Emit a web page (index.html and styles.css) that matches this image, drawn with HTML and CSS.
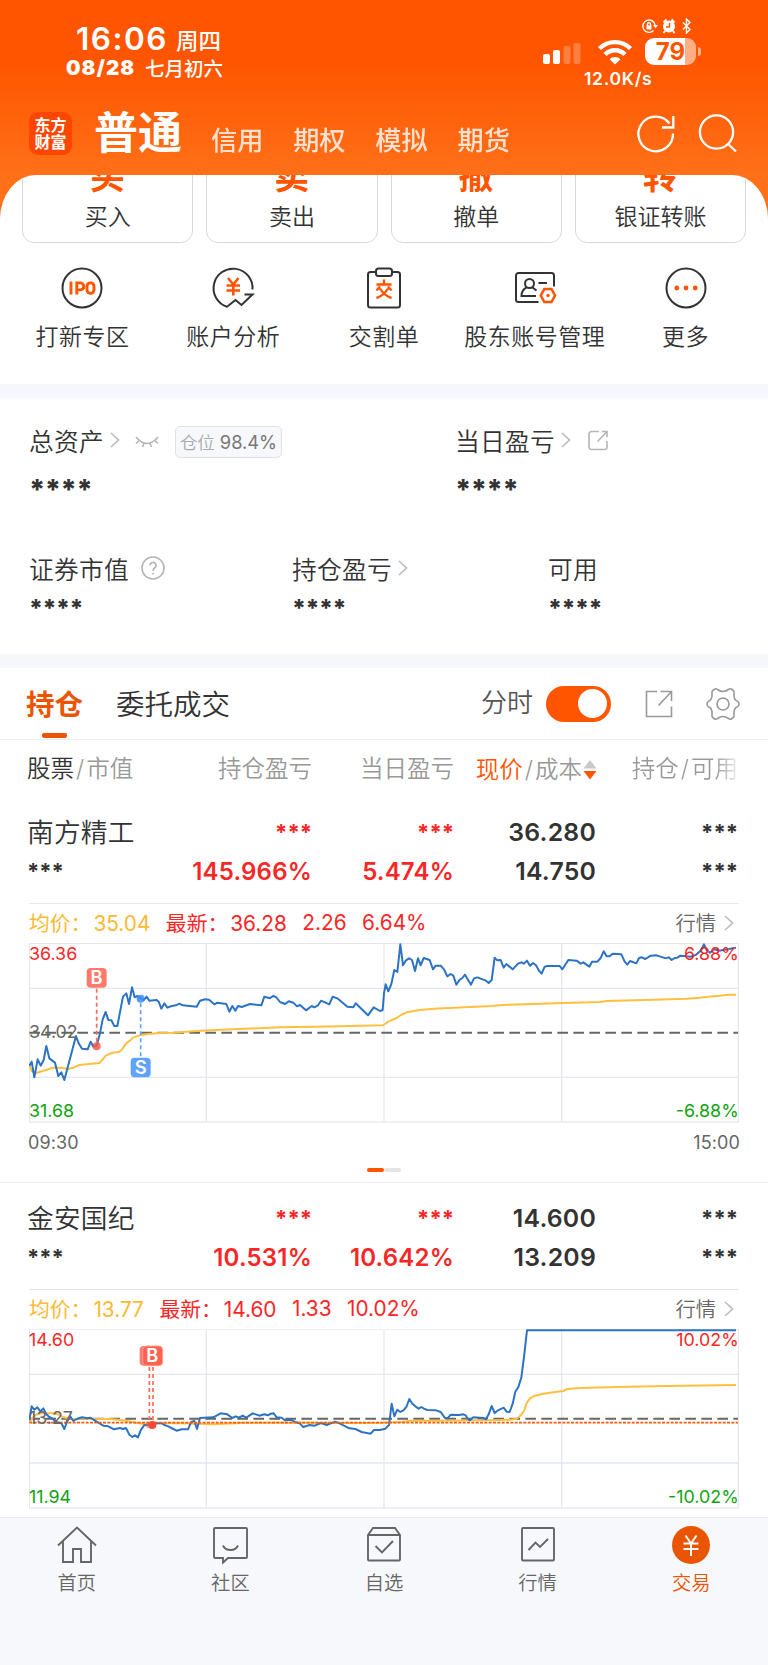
FILE: index.html
```
<!DOCTYPE html>
<html lang="zh-CN">
<head>
  <meta charset="UTF-8">
  <title>东方财富 - 交易</title>
  <link rel="stylesheet" href="styles.css">
</head>
<body>

<header>
  <div class="status">
    <div class="status-left">
      <div class="clock"><b>16:06</b><span>周四</span></div>
      <div class="date"><b>08/28</b><span>七月初六</span></div>
    </div>
    <div class="status-right">
      <svg class="mini" width="52" height="16" viewBox="0 0 52 16" fill="none" stroke="#fff" stroke-width="1.4">
        <path d="M12.5 12.5a6.2 6.2 0 1 1 1.7-5"/><path d="M12 7h5l-2.5 3.200z" fill="#fff" stroke="none"/>
        <path d="M5.500 7.500h5v4h-5z" fill="#fff" stroke="none"/><path d="M6.500 8V6.200a1.500 1.500 0 0 1 3 0V8"/>
        <circle cx="28" cy="8.500" r="6" fill="#fff" stroke="none"/>
        <path d="M22.500 4.500l3-3M33.500 4.500l-3-3M24 13l-1.500 2M32 13l1.500 2" stroke-width="2"/>
        <path d="M28.500 5v4h-3.500" stroke="#ff5500"/>
        <path d="M42 4.500l7 7-3.500 3.500V1L49 4.500l-7 7"/>
      </svg>
      <div class="signals">
        <svg width="38" height="22" viewBox="0 0 38 22" fill="#fff">
          <rect x="0" y="11" width="7" height="10" rx="2"/><rect x="10" y="7" width="7" height="14" rx="2"/>
          <rect x="20.500" y="3" width="7" height="18" rx="2" opacity=".25"/><rect x="30.500" y="0" width="7" height="21" rx="2" opacity=".25"/>
        </svg>
        <svg class="wifi" width="36" height="26" viewBox="0 0 36 26" fill="none" stroke="#fff" stroke-width="4.400">
          <path d="M2.500 9.500a22 22 0 0 1 31 0"/><path d="M8 15.500a14 14 0 0 1 20 0"/>
          <path d="M18 25.500l-5.500-5.300a8 8 0 0 1 11 0z" fill="#fff" stroke="none"/>
        </svg>
        <div class="battery"><b>79</b></div><i class="battery-tip"></i>
      </div>
      <div class="speed">12.0K/s</div>
    </div>
  </div>
  <nav class="top-nav">
    <div class="logo">东方<br>财富</div>
    <b>普通</b>
    <span>信用</span><span>期权</span><span>模拟</span><span>期货</span>
    <svg width="102" height="42" viewBox="0 0 102 42" fill="none" stroke="#fff" stroke-width="2.300">
      <path d="M38 20.500A17.300 17.300 0 1 1 34.500 10.500M38.300 3v11.500H27"/>
      <circle cx="81.500" cy="19" r="16.600"/><path d="M92.500 30.500l8.500 8"/>
    </svg>
  </nav>
</header>

<main>
  <section class="trade">
    <div class="cards">
      <div class="card"><b>买</b>买入</div>
      <div class="card"><b>卖</b>卖出</div>
      <div class="card"><b>撤</b>撤单</div>
      <div class="card"><b>转</b>银证转账</div>
    </div>
    <div class="quick">
      <div class="quick-item">
        <svg width="44" height="44" viewBox="0 0 44 44" fill="none" stroke="#333" stroke-width="2">
          <circle cx="22" cy="22" r="19.500"/>
          <path d="M11 15.500v13M16.800 28.500v-11.600h3.500a3.300 3.300 0 0 1 0 7h-3.500" stroke="#ff5500" stroke-width="2.900"/>
          <rect x="27" y="16.900" width="7" height="10.500" rx="3.400" stroke="#ff5500" stroke-width="2.900"/>
        </svg>
        打新专区
      </div>
      <div class="quick-item">
        <svg width="44" height="44" viewBox="0 0 44 44" fill="none" stroke="#333" stroke-width="2">
          <path d="M41.500 23.500A19.500 19.500 0 1 0 16 40.700l8.500-6.700 6 5L41.500 28.500h-8"/>
          <path d="M17 12l5.300 6.500L27.500 12M15.500 19.500h13.500M15.500 24.500h13.500M22.300 18.500v11" stroke="#ff5500" stroke-width="2.600"/>
        </svg>
        账户分析
      </div>
      <div class="quick-item">
        <svg width="44" height="44" viewBox="0 0 44 44" fill="none" stroke="#333" stroke-width="2">
          <path d="M14 6H8.500a2.500 2.500 0 0 0-2.500 2.500V39a2.500 2.500 0 0 0 2.500 2.500h27A2.500 2.500 0 0 0 38 39V8.500A2.500 2.500 0 0 0 35.500 6H30"/>
          <rect x="14" y="2.500" width="16" height="7.500" rx="2.500"/>
          <path d="M22 13.500v4M14.500 18.500h15M18 20.500l-3.500 4M26 20.500l3.500 4M26 22.500q-4 7-11.500 9.500M18 22.500q4 7 11.500 9.500" stroke="#ff5500" stroke-width="2.400"/>
        </svg>
        交割单
      </div>
      <div class="quick-item">
        <svg width="44" height="44" viewBox="0 0 44 44" fill="none" stroke="#333" stroke-width="2">
          <path d="M25.500 36H5.500A2.500 2.500 0 0 1 3 33.500v-24A2.500 2.500 0 0 1 5.500 7h33A2.500 2.500 0 0 1 41 9.500v11M25.500 17h8.500"/>
          <circle cx="16.500" cy="17.500" r="4.500"/><path d="M13.500 21.500q-5 2.500-5 8.500h14.500M19.500 21.500l4 3"/>
          <path d="M31.300 23h7.200l3.500 6.500-3.500 6.500h-7.200l-3.500-6.500z" stroke="#ff5500" stroke-width="2.500"/><circle cx="35" cy="29.500" r="1.700" fill="#ff5500" stroke="none"/>
        </svg>
        股东账号管理
      </div>
      <div class="quick-item">
        <svg width="44" height="44" viewBox="0 0 44 44" fill="none" stroke="#333" stroke-width="2">
          <circle cx="22" cy="22" r="19.500"/>
          <g fill="#ff5500" stroke="none"><circle cx="12.800" cy="22" r="2.400"/><circle cx="22" cy="22" r="2.400"/><circle cx="31.200" cy="22" r="2.400"/></g>
        </svg>
        更多
      </div>
    </div>
  </section>

  <section class="assets">
    <div class="asset-row">
      <div class="asset wide">
        <div class="label">总资产
          <svg class="arrow" viewBox="0 0 10 16"><path d="M1 1l7.500 7L1 15"/></svg>
          <svg class="eye" width="24" height="12" viewBox="0 0 24 12"><path d="M1 1q11 13 22 0M4 4.500L1 7.500M9 7.500l-1.500 3.500M15 7.500l1.500 3.500M20 4.500l3 3"/></svg>
          <span class="tag">仓位 <em>98.4%</em></span>
        </div>
        <div class="stars big">****</div>
      </div>
      <div class="asset">
        <div class="label">当日盈亏
          <svg class="arrow" viewBox="0 0 10 16"><path d="M1 1l7.500 7L1 15"/></svg>
          <svg class="share" width="20" height="21" viewBox="0 0 20 21"><path d="M11 1.500H3.500A2.500 2.500 0 0 0 1 4v13a2.500 2.500 0 0 0 2.500 2.500h13A2.500 2.500 0 0 0 19 17v-6M9.500 11.500L19 1.500M14 1.500h5v5.500"/></svg>
        </div>
        <div class="stars big">****</div>
      </div>
    </div>
    <div class="asset-row second">
      <div class="asset">
        <div class="label">证券市值
          <svg class="help" width="24" height="24" viewBox="0 0 24 24"><circle cx="12" cy="12" r="11"/><path d="M9 9.500a3 3 0 1 1 4.500 2.500q-1.500 1-1.500 3M12 16.800v1.700"/></svg>
        </div>
        <div class="stars">****</div>
      </div>
      <div class="asset">
        <div class="label">持仓盈亏
          <svg class="arrow" viewBox="0 0 10 16"><path d="M1 1l7.500 7L1 15"/></svg>
        </div>
        <div class="stars">****</div>
      </div>
      <div class="asset">
        <div class="label">可用</div>
        <div class="stars">****</div>
      </div>
    </div>
  </section>

  <section class="holdings">
    <div class="tabs">
      <b class="tab active">持仓</b>
      <span class="tab">委托成交</span>
      <span class="switch-label">分时</span>
      <i class="switch"></i>
      <svg width="28" height="28" viewBox="0 0 28 28"><path d="M12 1.500H1.500v25h25V16.500M13.500 15.500L26.500 1.500M15.500 1.500h11V11"/></svg>
      <svg width="34" height="34" viewBox="0 0 34 34"><path d="M8 2.500q2-1.500 3.500 0 5.500 4 11 0 1.500-1.500 3.500 0 2.500 1.500 2 3.500-.5 6.500 3 8 2 .8 2 3t-2 3q-3.500 1.500-3 8 .5 2-2 3.500-2 1.500-3.500 0-5.500-4-11 0-1.500 1.500-3.500 0-2.500-1.500-2-3.500.5-6.500-3-8-2-.8-2-3t2-3q3.500-1.500 3-8-.5-2 2-3.500z"/><circle cx="17" cy="17" r="6"/></svg>
    </div>
    <div class="grid head">
      <div><span class="dark">股票</span><i>/</i>市值</div>
      <div>持仓盈亏</div>
      <div>当日盈亏</div>
      <div class="sort"><span class="orange">现价</span><i>/</i>成本<svg width="14" height="20" viewBox="0 0 14 20"><path d="M7 0l6.500 8.500H.5z" fill="#c8c8c8"/><path d="M7 19.500L.5 11h13z" fill="#ff5500"/></svg></div>
      <div class="fade">持仓<i>/</i>可用</div>
    </div>

    <article class="stock">
      <div class="grid quote">
        <div><span class="name">南方精工</span><span class="mask">***</span></div>
        <div class="red"><span class="mask">***</span><span>145.966%</span></div>
        <div class="red"><span class="mask">***</span><span>5.474%</span></div>
        <div class="price"><span>36.280</span><span>14.750</span></div>
        <div><span class="mask">***</span><span class="mask">***</span></div>
      </div>
      <div class="summary">
        <span class="avg">均价：<em>35.04</em></span>
        <span>最新：<em>36.28</em></span><span>2.26</span><span>6.64%</span>
        <a>行情<svg class="arrow" viewBox="0 0 10 16"><path d="M1 1l7.500 7L1 15"/></svg></a>
      </div>
      <svg class="chart" viewBox="87 159 2130 540">
        <path class="grid-line" d="M88 295H2215M88 562H2215M619 160V694M1152 160V694M1685 160V694"/>
        <path class="frame" d="M88 160H2215V696H88z"/>
        <path class="base" d="M88 428H2214"/>
        <polyline class="avg-line" points="88,528 97,545 108,549 135,541 160,533 185,533 205,537 220,533 238,525 298,519 305,512 318,496 335,489 358,485 368,476 378,460 390,452 400,442 420,436 445,432 480,429 520,428 600,422 700,418 840,412 950,410 1148,406 1155,402 1166,394 1190,384 1203,375 1220,367 1260,360 1300,356 1410,351 1475,348 1510,345 1600,342 1690,339 1800,336 1820,333 1960,329 2060,326 2100,323 2125,320 2160,317 2185,314 2208,314"/>
        <polyline class="price-line" points="88,528 95,515 103,562 113,508 122,527 131,510 139,468 148,505 165,518 175,558 184,547 193,570 228,438 236,460 246,476 263,478 272,455 280,470 290,467 300,430 308,388 317,366 325,390 334,391 343,408 352,408 369,320 379,310 387,342 396,292 404,322 412,318 422,325 431,330 440,320 448,332 470,330 476,335 484,356 493,340 502,353 515,348 528,346 538,341 548,346 590,350 600,332 615,328 627,329 643,343 652,338 679,342 688,365 697,348 706,362 714,348 725,351 750,342 784,346 793,320 810,325 819,318 828,321 840,336 855,342 866,334 880,338 891,349 900,345 918,361 935,348 943,352 954,346 963,332 988,343 998,320 1012,325 1042,350 1060,352 1067,340 1104,376 1121,352 1140,363 1148,360 1152,310 1157,283 1165,304 1174,282 1183,240 1192,246 1201,163 1209,226 1218,211 1227,205 1236,210 1245,243 1254,205 1262,226 1271,204 1289,210 1299,238 1307,227 1322,227 1332,238 1342,259 1352,252 1360,257 1369,284 1378,270 1387,264 1395,254 1413,284 1422,265 1432,262 1456,271 1466,279 1475,270 1484,203 1492,211 1502,210 1511,233 1519,222 1538,238 1554,221 1564,217 1572,221 1581,212 1590,227 1599,219 1608,226 1617,242 1625,251 1634,230 1642,228 1679,228 1687,238 1705,210 1730,212 1742,221 1750,217 1768,230 1776,215 1792,215 1802,204 1811,184 1820,199 1829,199 1838,191 1864,193 1874,215 1882,224 1890,213 1909,220 1917,204 1926,202 1936,207 1952,197 1970,196 1997,205 2006,202 2015,210 2024,204 2032,203 2041,197 2072,200 2087,195 2102,182 2112,163 2120,180 2130,188 2142,178 2157,182 2192,176 2208,173"/>
        <path class="buy-line" d="M290 296V460"/><circle cx="290" cy="469" r="12" fill="#f4584f" opacity=".85"/>
        <rect x="260" y="234" width="60" height="59" rx="12" fill="#ff7a6b"/><text class="mark" x="290" y="283">B</text>
        <path class="sell-line" d="M422 340V502"/><circle cx="422" cy="326" r="12" fill="#3c8bf5" opacity=".85"/>
        <rect x="392" y="503" width="60" height="59" rx="12" fill="#5fa3ff"/><text class="mark" x="422" y="552">S</text>
        <text class="up" x="87" y="210">36.36</text><text x="87" y="445">34.02</text><text class="down" x="87" y="680">31.68</text>
        <text class="up end" x="2216" y="210">6.88%</text><text class="down end" x="2216" y="680">-6.88%</text>
      </svg>
      <div class="times"><span>09:30</span><span>15:00</span></div>
      <div class="pager"><i class="on"></i><i></i></div>
    </article>

    <article class="stock">
      <div class="grid quote">
        <div><span class="name">金安国纪</span><span class="mask">***</span></div>
        <div class="red"><span class="mask">***</span><span>10.531%</span></div>
        <div class="red"><span class="mask">***</span><span>10.642%</span></div>
        <div class="price"><span>14.600</span><span>13.209</span></div>
        <div><span class="mask">***</span><span class="mask">***</span></div>
      </div>
      <div class="summary">
        <span class="avg">均价：<em>13.77</em></span>
        <span>最新：<em>14.60</em></span><span>1.33</span><span>10.02%</span>
        <a>行情<svg class="arrow" viewBox="0 0 10 16"><path d="M1 1l7.500 7L1 15"/></svg></a>
      </div>
      <svg class="chart" viewBox="87 416 2130 540">
        <path class="grid-line" d="M88 552H2215M88 818H2215M619 420V952M1152 420V952M1685 420V952"/>
        <path class="frame" d="M88 416H2215V953H88z"/>
        <path class="base" d="M88 685H2214"/>
        <polyline class="avg-line" points="88,697 98,682 108,673 122,669 160,669 178,673 188,680 210,685 330,686 370,690 400,696 430,701 480,699 540,699 640,702 740,697 900,697 1040,698 1150,697 1205,695 1232,691 1300,691 1500,689 1530,688 1550,685 1562,675 1572,662 1580,638 1590,624 1600,618 1630,610 1660,606 1690,602 1702,596 1740,593 1850,590 2000,587 2208,584"/>
        <polyline class="price-line" points="88,690 95,648 103,658 112,651 121,663 130,654 139,672 148,680 158,685 167,695 184,698 193,716 202,692 211,679 220,692 232,685 246,681 262,684 271,682 290,694 310,706 325,708 342,717 360,713 369,716 378,713 388,733 397,740 405,735 414,741 422,720 432,705 445,703 455,700 484,698 493,704 505,708 520,716 530,721 545,717 564,717 574,694 583,692 591,716 600,683 612,682 640,681 662,669 682,672 697,683 707,678 717,682 728,676 739,682 758,669 778,676 793,672 804,675 812,670 821,669 830,681 845,682 855,690 872,688 888,696 899,699 910,710 929,704 944,706 963,698 980,704 1005,694 1020,700 1048,714 1066,716 1085,725 1112,730 1122,719 1140,719 1156,715 1167,704 1175,640 1183,678 1192,658 1201,665 1210,660 1219,650 1228,626 1237,640 1246,648 1256,655 1264,650 1272,655 1282,659 1308,660 1322,665 1334,682 1343,684 1352,673 1378,674 1390,672 1397,675 1402,684 1410,690 1420,681 1450,683 1458,687 1466,672 1475,647 1484,668 1494,660 1511,652 1520,664 1529,665 1538,640 1546,604 1555,590 1564,562 1572,500 1581,420 2208,420"/>
        <path class="cost" d="M88 697H2214"/>
        <path class="buy-line" d="M448 530V695M459 530V695"/><circle cx="448" cy="704" r="10" fill="#ff5a45" opacity=".6"/><circle cx="457" cy="704" r="12" fill="#fa4837"/>
        <rect x="419" y="467" width="60" height="59" rx="12" fill="#ff7a6b"/><rect x="428" y="467" width="60" height="59" rx="12" fill="#ff6250" stroke="#ff9b8e" stroke-width="3"/><text class="mark" x="457" y="516">B</text>
        <text class="up" x="87" y="467">14.60</text><text x="87" y="702">13.27</text><text class="down" x="87" y="937">11.94</text>
        <text class="up end" x="2216" y="467">10.02%</text><text class="down end" x="2216" y="937">-10.02%</text>
      </svg>
    </article>
  </section>
</main>

<footer>
  <div class="foot-item">
    <svg width="42" height="42" viewBox="0 0 42 42"><path d="M2 21.500L21 3.500l19 18M7 17.500V38h10V25h8v13h10V17.500"/></svg>首页
  </div>
  <div class="foot-item">
    <svg width="42" height="42" viewBox="0 0 42 42"><path d="M6 4h31q1 0 1 1v28q0 1-1 1H19l-5 4.500V34H6q-1 0-1-1V5q0-1 1-1zM14 21.500q2 4.500 7.500 4.500t7.500-4.500"/></svg>社区
  </div>
  <div class="foot-item">
    <svg width="42" height="42" viewBox="0 0 42 42"><path d="M5 11l5-7h22l5 7v24.500q0 1-1 1H6q-1 0-1-1zM5 11h32M12.500 22l6.500 6.500L30 17"/></svg>自选
  </div>
  <div class="foot-item">
    <svg width="42" height="42" viewBox="0 0 42 42"><path d="M6 4h30q1 0 1 1v30.500q0 1-1 1H6q-1 0-1-1V5q0-1 1-1zM11.500 26l7-7.500 4.500 4.500 8-8"/></svg>行情
  </div>
  <div class="foot-item active">
    <svg width="42" height="42" viewBox="0 0 42 42"><circle cx="21" cy="21" r="19" fill="#ea5504" stroke="none"/><path d="M15.500 11.500l5.500 8 5.500-8M13.500 19.500h15M13.500 25h15M21 19.500V32" stroke="#fff"/></svg>交易
  </div>
</footer>

</body>
</html>
```
FILE: styles.css
```
* {
  box-sizing: border-box;
}

body {
  margin: 0;
  width: 768px;
  height: 1665px;
  overflow: hidden;
  display: flex;
  flex-direction: column;
  font-family: Inter, 'Noto Sans CJK SC', sans-serif;
  font-weight: 350;
  color: #333;
  background: #fff;
}

svg {
  display: block;
  flex: none;
}

i, em {
  font-style: normal;
}

header {
  flex: none;
  height: 219px;
  color: #fff;
  background: linear-gradient(#ff5500 60px, #ff7018 175px);
}

.status {
  height: 100px;
  display: flex;
  justify-content: space-between;
  padding: 0 67px 0 66px;
}

.status-left {
  padding-top: 21px;
}

.clock {
  display: flex;
  align-items: center;
  height: 34px;
  padding-left: 10px;
  gap: 8px;
  font-size: 22.5px;
  font-weight: 500;
}

.clock b {
  font-size: 31.5px;
  font-weight: 600;
  letter-spacing: 1.5px;
}

.clock span {
  padding-top: 1px;
}

.date {
  display: flex;
  align-items: center;
  height: 24px;
  gap: 10px;
  font-size: 19.5px;
  font-weight: 500;
}

.date b {
  font-size: 20.5px;
  font-weight: 900;
  letter-spacing: 1px;
}

.date span {
  padding-top: 1px;
}

.status-right {
  width: 158px;
  padding-top: 18px;
}

.mini {
  margin-left: 98px;
}

.signals {
  display: flex;
  align-items: center;
  margin-top: 4px;
  height: 27px;
}

.signals svg:first-child {
  margin-top: 4px;
}

.wifi {
  margin: 0 12px 0 16px;
}

.battery {
  width: 51px;
  height: 27px;
  border-radius: 9px;
  background: linear-gradient(90deg, #fff 79%, #ffae86 79%);
  color: #ff5500;
  text-align: center;
  line-height: 27px;
  font-size: 24px;
}

.battery b {
  font-weight: 700;
}

.battery-tip {
  width: 3px;
  height: 9px;
  margin-left: 2px;
  border-radius: 0 4px 4px 0;
  background: #ffae86;
}

.speed {
  margin: 3px 0 0 41px;
  font-size: 17.5px;
  line-height: 22px;
  font-weight: 600;
  letter-spacing: 0.7px;
}

.top-nav {
  display: flex;
  height: 75px;
  padding: 0 31px 0 29px;
  align-items: center;
  font-size: 26.2px;
}

.logo {
  width: 43px;
  height: 43px;
  margin: -8px 22px 0 0;
  padding-top: 5px;
  border-radius: 9px;
  background: #ff4600;
  font-size: 16px;
  line-height: 17px;
  font-weight: 700;
  text-align: center;
}

.top-nav b {
  margin: -9px 29px 0 0;
  font-size: 44px;
  line-height: 60px;
  font-weight: 700;
}

.top-nav span {
  margin: 3px 29.8px 0 0;
  font-weight: 500;
  opacity: 0.8;
}

.top-nav svg {
  margin: -7px 0 0 auto;
}

main {
  flex: none;
  height: 1342px;
  margin-top: -44px;
  overflow: hidden;
  border-radius: 36px 36px 0 0 / 44px 44px 0 0;
  background: #fff;
}

.trade {
  border-bottom: 14px solid #f5f7fa;
  height: 223px;
}

/* cards are scrolled half under the header */
.cards {
  display: grid;
  grid-template-columns: repeat(4, 1fr);
  gap: 13px;
  padding: 0 22px;
  height: 68px;
  align-content: end;
  overflow: hidden;
}

.card {
  height: 100px;
  border: 1px solid #d8d8d8;
  border-radius: 12px;
  display: flex;
  flex-direction: column;
  align-items: center;
  justify-content: flex-end;
  padding-bottom: 7px;
  font-size: 23px;
  line-height: 36px;
}

.card b {
  color: #ff5500;
  font-size: 35px;
  line-height: 36px;
  font-weight: 700;
  margin-bottom: 5px;
}

.quick {
  display: grid;
  grid-template-columns: repeat(5, 1fr);
  padding: 23px 7px 0;
}

.quick-item {
  display: flex;
  flex-direction: column;
  align-items: center;
  font-size: 23px;
  line-height: 34px;
  letter-spacing: 0.5px;
  gap: 10px;
  white-space: nowrap;
}

.assets {
  height: 270px;
  padding: 23px 0 0 29px;
  border-bottom: 14px solid #f5f7fa;
}

.asset-row {
  display: grid;
  grid-template-columns: 426px 1fr;
}

.asset-row.second {
  grid-template-columns: 263px 256px 1fr;
  margin-top: 48px;
}

.label {
  display: flex;
  align-items: center;
  height: 38px;
  font-size: 24.7px;
  letter-spacing: 0.3px;
}

.arrow {
  width: 10px;
  height: 16px;
  margin-left: 6px;
  fill: none;
  stroke: #bbb;
  stroke-width: 1.6;
}

.eye, .share, .help {
  fill: none;
  stroke: #b5b5b5;
  stroke-width: 1.6;
}

.eye {
  margin: 4px 0 0 15px;
}

.share {
  margin-left: 17px;
}

.help {
  margin-left: 12px;
}

.tag {
  margin: 3px 0 0 16px;
  width: 107px;
  height: 32px;
  border: 1px solid #dfe1e6;
  border-radius: 5px;
  background: #f7f8fb;
  color: #aaa;
  font-size: 17.5px;
  line-height: 30px;
  text-align: center;
  letter-spacing: 0;
}

.tag em {
  color: #777;
  font-size: 18.3px;
  font-weight: 400;
}

.stars {
  font-size: 24px;
  font-weight: 800;
  line-height: 32px;
  height: 32px;
  padding-top: 6px;
  letter-spacing: -0.5px;
}

.stars.big {
  font-size: 28px;
  height: 42px;
  padding-top: 15px;
}

.tabs {
  display: flex;
  align-items: center;
  height: 72px;
  padding: 0 28px 0 26px;
  border-bottom: 1px solid #eee;
  font-size: 28.5px;
}

.tabs svg {
  fill: none;
  stroke: #999;
  stroke-width: 1.6;
}

.tab {
  position: relative;
  top: -1px;
  margin-right: 33px;
}

.tab.active {
  color: #ea5504;
  font-weight: 600;
}

.tab.active::after {
  content: '';
  position: absolute;
  left: 16px;
  bottom: -15px;
  width: 25px;
  height: 5px;
  border-radius: 2px;
  background: #ea5504;
}

.switch-label {
  margin-left: auto;
  font-size: 26px;
  line-height: 34px;
  padding-bottom: 2px;
  color: #555;
}

.switch {
  width: 65px;
  height: 36px;
  margin: 0 34px 0 13px;
  padding: 3.5px 4px;
  border-radius: 18px;
  background: #ff5500;
}

.switch::after {
  content: '';
  display: block;
  width: 29px;
  height: 29px;
  margin-left: auto;
  border-radius: 50%;
  background: #fff;
}

.tabs svg:last-child {
  margin-left: 33px;
}

.grid {
  display: grid;
  grid-template-columns: 135px 150px 142px 142px 142px;
  padding-left: 27px;
  text-align: right;
}

.grid > div:first-child {
  text-align: left;
}

.head {
  height: 60px;
  line-height: 58px;
  font-size: 23.5px;
  color: #999;
  white-space: nowrap;
}

.head i {
  margin: 0 2px;
}

.dark {
  color: #333;
}

.orange {
  color: #ff5500;
}

.sort {
  display: flex;
  align-items: center;
  justify-content: flex-end;
}

.sort svg {
  margin: 0 -1px 0 1px;
}

.head .fade {
  background: linear-gradient(90deg, #999 84%, #eee);
  background-clip: text;
  color: transparent;
}

.quote {
  height: 103px;
  padding-top: 13px;
  font-size: 24px;
  font-weight: 600;
  letter-spacing: 0.2px;
}

.quote span {
  display: block;
  height: 39px;
  line-height: 39px;
}

.quote .name {
  font-size: 26.7px;
  font-weight: 350;
  white-space: nowrap;
}

.quote .mask {
  font-size: 22px;
  font-weight: 700;
  letter-spacing: 0;
}

.red {
  color: #f92626;
}

.price {
  font-size: 24.8px;
}

.summary {
  display: flex;
  align-items: center;
  gap: 15.5px;
  height: 40px;
  margin: 0 29px;
  padding-bottom: 3px;
  border-top: 1px solid #e8e8ea;
  font-size: 20.8px;
  font-weight: 400;
  color: #f92626;
}

.summary em {
  margin-left: 2px;
}

.avg {
  color: #fdb933;
}

.summary a {
  display: flex;
  align-items: center;
  margin-left: auto;
  padding-right: 5px;
  font-size: 20.3px;
  font-weight: 350;
  color: #666;
}

.summary .arrow {
  margin: 2px 0 0 8px;
}

.chart {
  width: 710px;
  height: 180px;
  margin-left: 29px;
  fill: none;
}

.grid-line, .frame {
  stroke: #e4e7ef;
  stroke-width: 4;
}

.frame {
  stroke: #dfe1e8;
  stroke-width: 3;
}

.base {
  stroke: #666;
  stroke-width: 6;
  stroke-dasharray: 32 16;
}

.avg-line, .price-line {
  stroke: #ffc03f;
  stroke-width: 6;
  stroke-linejoin: round;
}

.price-line {
  stroke: #2c73c4;
}

.cost {
  stroke: #ff5a0a;
  stroke-width: 5;
  stroke-dasharray: 9 4;
}

.buy-line, .sell-line {
  stroke: #ff6a58;
  stroke-width: 5;
  stroke-dasharray: 12 9;
}

.sell-line {
  stroke: #5fa3ff;
}

.chart text {
  fill: #666;
  font-size: 53.5px;
  font-weight: 400;
}

.chart .up {
  fill: #f92626;
}

.chart .down {
  fill: #12a312;
}

.chart .end {
  text-anchor: end;
}

.chart .mark {
  fill: #fff;
  font-size: 55px;
  font-weight: 600;
  text-anchor: middle;
}

.times {
  display: flex;
  justify-content: space-between;
  margin: 0 28px;
  height: 40px;
  line-height: 40px;
  font-size: 18px;
  font-weight: 400;
  letter-spacing: 0.1px;
  color: #666;
}

.pager {
  display: flex;
  justify-content: center;
  height: 20px;
  margin-bottom: 3px;
  padding-top: 5px;
  border-bottom: 1px solid #f0f0f0;
}

.pager i {
  width: 17px;
  height: 4px;
  border-radius: 2px;
  background: #e4e4e4;
}

.pager .on {
  background: #ff5500;
}

footer {
  flex: 1;
  display: grid;
  grid-template-columns: repeat(5, 1fr);
  border-top: 1px solid #ececf0;
  background: #f7f8fb;
  color: #666;
}

.foot-item {
  display: flex;
  flex-direction: column;
  align-items: center;
  padding-top: 6px;
  gap: 1px;
  font-size: 19.3px;
  line-height: 32px;
}

.foot-item svg {
  fill: none;
  stroke: #666;
  stroke-width: 1.9;
}

.foot-item.active {
  color: #ea5504;
}
```
